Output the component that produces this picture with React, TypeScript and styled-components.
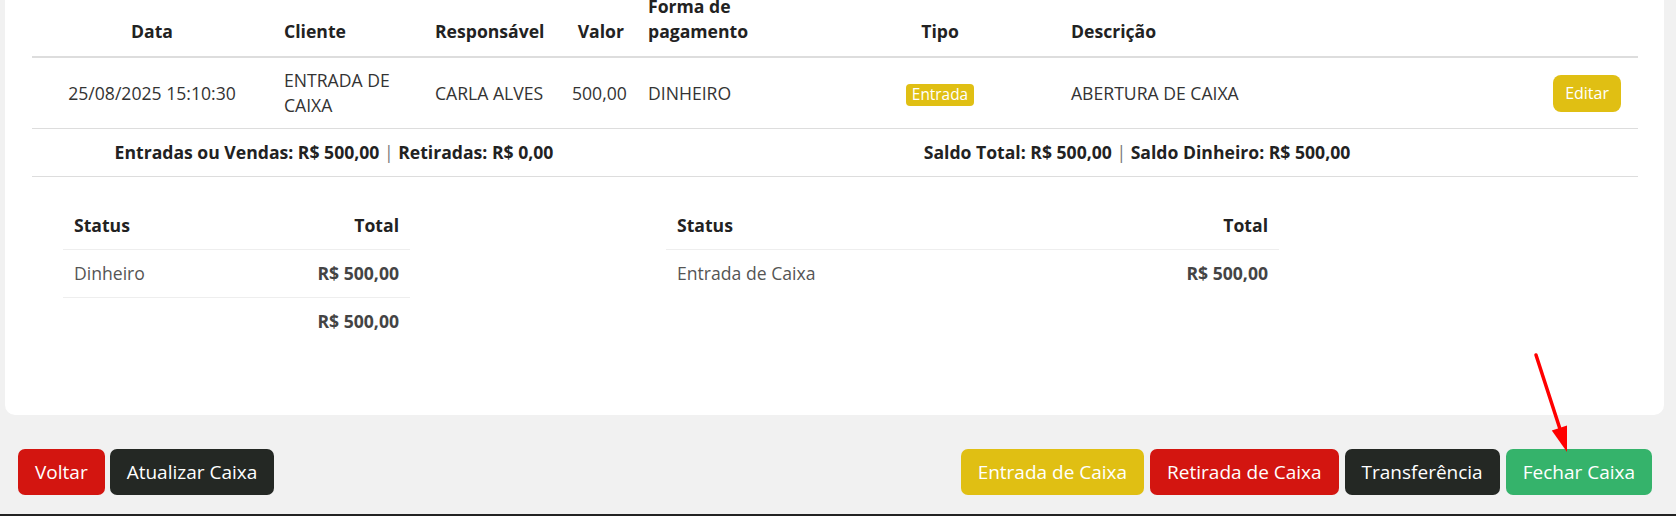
import React from 'react'
import styled, { createGlobalStyle } from 'styled-components'

const GlobalStyle = createGlobalStyle`
  html, body {
    margin: 0;
    padding: 0;
    background: #f1f1f1;
    font-family: "Open Sans", "Liberation Sans", sans-serif;
  }
`

const Page = styled.div`
  position: relative;
  box-sizing: border-box;
  height: 516px;
  overflow: hidden;
  display: flex;
  flex-direction: column;
  border-bottom: 2px solid #222;
  background: #f1f1f1;
`

const Panel = styled.div`
  margin: -38px 12px 0 5px;
  padding: 20px 26px 70px 27px;
  background: #fff;
  border-radius: 0 0 10px 10px;
`

const Table = styled.table`
  width: 100%;
  border-collapse: collapse;
  table-layout: fixed;
  font-size: 17.6px;
  line-height: 25px;
  color: #333;
`

const Th = styled.th<{ $align?: string }>`
  padding: 12px;
  text-align: ${(p) => p.$align || 'left'};
  vertical-align: bottom;
  font-weight: 700;
  color: #222;
  border-bottom: 2px solid #ddd;
`

const Td = styled.td<{ $align?: string }>`
  padding: 10px 12px;
  text-align: ${(p) => p.$align || 'left'};
  vertical-align: middle;
  border-bottom: 1px solid #ddd;
`

const ActionTd = styled(Td)`
  padding-right: 17px;
`

const SummaryCell = styled.td`
  padding: 11px 12px;
  text-align: center;
  font-weight: 700;
  color: #222;
  border-bottom: 1px solid #ddd;
`

const Sep = styled.span`
  font-weight: 400;
  color: #777;
`

const Badge = styled.span`
  display: inline-block;
  padding: 0 5.5px;
  line-height: 22px;
  font-size: 15.4px;
  color: #fff;
  background: #e0bf13;
  border-radius: 4px;
`

const SmallButton = styled.button`
  height: 37px;
  padding: 0 12px;
  border: none;
  border-radius: 8px;
  background: #e0bf13;
  color: #fff;
  font-family: inherit;
  font-size: 16px;
`

const Totals = styled.div`
  display: flex;
  align-items: flex-start;
  margin-top: 25px;
`

const TotalsTable = styled.table<{ $width: number; $offset: number }>`
  width: ${(p) => p.$width}px;
  margin-left: ${(p) => p.$offset}px;
  border-collapse: collapse;
  font-size: 17.6px;
  line-height: 25px;
`

const TotalsTh = styled.th<{ $align?: string }>`
  padding: 11px;
  text-align: ${(p) => p.$align || 'left'};
  font-weight: 700;
  color: #222;
`

const TotalsTd = styled.td<{ $align?: string; $bold?: boolean }>`
  padding: 11px;
  text-align: ${(p) => p.$align || 'left'};
  font-weight: ${(p) => (p.$bold ? 700 : 400)};
  color: ${(p) => (p.$bold ? '#444' : '#555')};
  border-top: 1px solid #eee;
`

const Footer = styled.div`
  display: flex;
  justify-content: space-between;
  margin-top: 34px;
  padding: 0 24px 0 18px;
`

const Group = styled.div<{ $gap: number }>`
  display: flex;
  gap: ${(p) => p.$gap}px;
`

const colors = {
  red: '#d31510',
  dark: '#242824',
  yellow: '#e0bf13',
  green: '#35b36b',
}

const Button = styled.button<{ $color: keyof typeof colors }>`
  height: 46px;
  padding: 0 17px;
  border: none;
  border-radius: 7px;
  background: ${(p) => colors[p.$color]};
  color: #fff;
  font-family: inherit;
  font-size: 19px;
  white-space: nowrap;
`

const Arrow = styled.svg`
  position: absolute;
  left: 1525px;
  top: 345px;
`

const cols = [240, 151, 137, 76, 185, 238, 441, 138]

export default function App() {
  return (
    <Page>
      <GlobalStyle />
      <Panel>
        <Table>
          <colgroup>
            {cols.map((w, i) => (
              <col key={i} style={{ width: w }} />
            ))}
          </colgroup>
          <thead>
            <tr>
              <Th $align="center">Data</Th>
              <Th>Cliente</Th>
              <Th>Responsável</Th>
              <Th $align="right">Valor</Th>
              <Th>Forma de pagamento</Th>
              <Th $align="center">Tipo</Th>
              <Th>Descrição</Th>
              <Th />
            </tr>
          </thead>
          <tbody>
            <tr>
              <Td $align="center">25/08/2025 15:10:30</Td>
              <Td>ENTRADA DE CAIXA</Td>
              <Td>CARLA ALVES</Td>
              <Td $align="right">500,00</Td>
              <Td>DINHEIRO</Td>
              <Td $align="center">
                <Badge>Entrada</Badge>
              </Td>
              <Td>ABERTURA DE CAIXA</Td>
              <ActionTd $align="right">
                <SmallButton>Editar</SmallButton>
              </ActionTd>
            </tr>
            <tr>
              <SummaryCell colSpan={4}>
                Entradas ou Vendas: R$ 500,00 <Sep>|</Sep> Retiradas: R$ 0,00
              </SummaryCell>
              <SummaryCell colSpan={4}>
                Saldo Total: R$ 500,00 <Sep>|</Sep> Saldo Dinheiro: R$ 500,00
              </SummaryCell>
            </tr>
          </tbody>
        </Table>

        <Totals>
          <TotalsTable $width={347} $offset={31}>
            <thead>
              <tr>
                <TotalsTh>Status</TotalsTh>
                <TotalsTh $align="right">Total</TotalsTh>
              </tr>
            </thead>
            <tbody>
              <tr>
                <TotalsTd>Dinheiro</TotalsTd>
                <TotalsTd $align="right" $bold>R$ 500,00</TotalsTd>
              </tr>
              <tr>
                <TotalsTd />
                <TotalsTd $align="right" $bold>R$ 500,00</TotalsTd>
              </tr>
            </tbody>
          </TotalsTable>
          <TotalsTable $width={613} $offset={256}>
            <thead>
              <tr>
                <TotalsTh>Status</TotalsTh>
                <TotalsTh $align="right">Total</TotalsTh>
              </tr>
            </thead>
            <tbody>
              <tr>
                <TotalsTd>Entrada de Caixa</TotalsTd>
                <TotalsTd $align="right" $bold>R$ 500,00</TotalsTd>
              </tr>
            </tbody>
          </TotalsTable>
        </Totals>
      </Panel>

      <Footer>
        <Group $gap={5}>
          <Button $color="red">Voltar</Button>
          <Button $color="dark">Atualizar Caixa</Button>
        </Group>
        <Group $gap={6}>
          <Button $color="yellow">Entrada de Caixa</Button>
          <Button $color="red">Retirada de Caixa</Button>
          <Button $color="dark">Transferência</Button>
          <Button $color="green">Fechar Caixa</Button>
        </Group>
      </Footer>

      <Arrow width="55" height="115" viewBox="0 0 55 115">
        <line x1="11" y1="10" x2="35" y2="84" stroke="#ff0000" strokeWidth="3.5" strokeLinecap="round" />
        <polygon points="42,107 42,80.5 26.8,85.6" fill="#ff0000" />
      </Arrow>
    </Page>
  )
}
